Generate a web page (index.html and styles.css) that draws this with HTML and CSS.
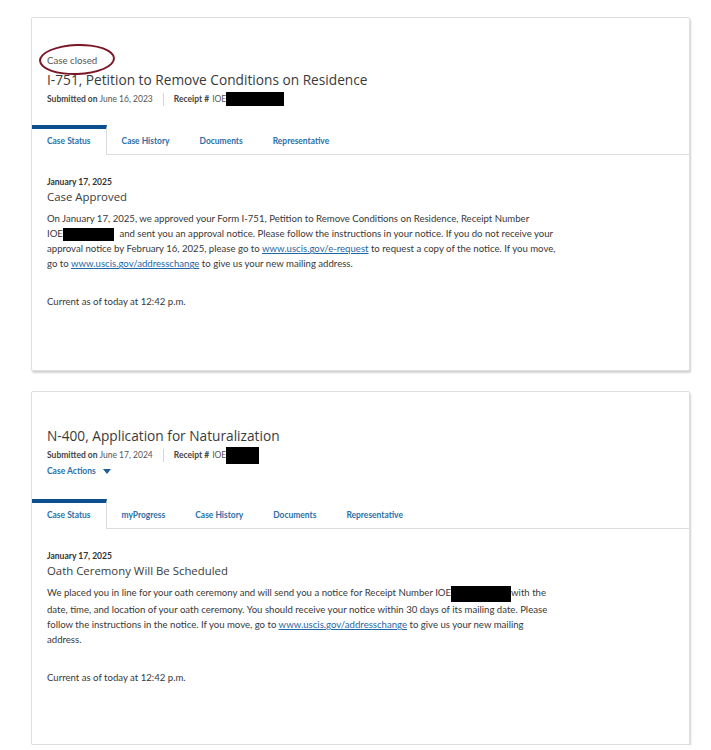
FILE: index.html
```html
<!DOCTYPE html>
<html lang="en">
<head>
<meta charset="utf-8">
<title>Case Status</title>
<link rel="stylesheet" href="styles.css">
</head>
<body>
<main class="page">
  <section class="card">
    <header class="card-head has-status">
      <div class="status-line"><span class="closed">Case closed</span></div>
      <h1 class="form-title">I-751, Petition to Remove Conditions on Residence</h1>
      <div class="meta">
        <span><b>Submitted on</b> June 16, 2023</span>
        <span class="sep"></span>
        <span class="receipt"><b>Receipt #</b>IOE<span class="redact r1"></span></span>
      </div>
    </header>
    <nav class="tabs">
      <a class="tab active">Case Status</a>
      <a class="tab">Case History</a>
      <a class="tab">Documents</a>
      <a class="tab">Representative</a>
    </nav>
    <div class="card-body">
      <div class="date">January 17, 2025</div>
      <h2 class="status">Case Approved</h2>
      <p class="msg">On January 17, 2025, we approved your Form I-751, Petition to Remove Conditions on Residence, Receipt Number<br>IOE<span class="redact r2"></span> and sent you an approval notice. Please follow the instructions in your notice. If you do not receive your<br>approval notice by February 16, 2025, please go to <a class="link">www.uscis.gov/e-request</a> to request a copy of the notice. If you move,<br>go to <a class="link">www.uscis.gov/addresschange</a> to give us your new mailing address.</p>
      <p class="current">Current as of today at 12:42 p.m.</p>
    </div>
  </section>

  <section class="card">
    <header class="card-head">
      <h1 class="form-title">N-400, Application for Naturalization</h1>
      <div class="meta">
        <span><b>Submitted on</b> June 17, 2024</span>
        <span class="sep"></span>
        <span class="receipt"><b>Receipt #</b>IOE<span class="redact r3"></span></span>
      </div>
      <div class="actions">Case Actions <span class="caret"></span></div>
    </header>
    <nav class="tabs">
      <a class="tab active">Case Status</a>
      <a class="tab">myProgress</a>
      <a class="tab">Case History</a>
      <a class="tab">Documents</a>
      <a class="tab">Representative</a>
    </nav>
    <div class="card-body">
      <div class="date">January 17, 2025</div>
      <h2 class="status">Oath Ceremony Will Be Scheduled</h2>
      <p class="msg">We placed you in line for your oath ceremony and will send you a notice for Receipt Number IOE<span class="redact r4"></span>with the<br>date, time, and location of your oath ceremony. You should receive your notice within 30 days of its mailing date. Please<br>follow the instructions in the notice. If you move, go to <a class="link">www.uscis.gov/addresschange</a> to give us your new mailing<br>address.</p>
      <p class="current">Current as of today at 12:42 p.m.</p>
    </div>
  </section>
</main>
</body>
</html>
```

FILE: styles.css
```css
* { box-sizing: border-box; }
html, body { margin: 0; padding: 0; background: #fff; }
body {
  font-family: "Lato", "Liberation Sans", sans-serif;
  color: #383838;
}
.page {
  padding: 17px 0 0 31px;
  display: flex;
  flex-direction: column;
  gap: 20px;
  width: 690px;
}
.card {
  width: 659px;
  height: 354px;
  border: 1px solid #dedede;
  border-radius: 2px;
  box-shadow: 1px 2px 2px rgba(0,0,0,0.18);
  background: #fff;
  display: flex;
  flex-direction: column;
}
.card-head {
  height: 107px;
  padding: 34px 15px 0;
}
.card-head.has-status {
  padding-top: 32px;
}
.status-line {
  height: 20px;
  display: flex;
  align-items: center;
}
.closed {
  position: relative;
  font-size: 9.7px;
  line-height: 12px;
  color: #555;
}
.closed::before {
  content: "";
  position: absolute;
  left: -8px;
  top: -10px;
  width: 72px;
  height: 27px;
  border: 2.5px solid #7b1626;
  border-radius: 50%;
  transform: rotate(-2deg);
}
.form-title {
  margin: 0;
  font-family: "Open Sans", sans-serif;
  font-weight: 400;
  font-size: 13.7px;
  line-height: 20px;
  color: #3a3a3a;
}
.meta {
  display: flex;
  align-items: center;
  font-size: 8.5px;
  color: #555;
  height: 18px;
}
.meta b { font-weight: 700; color: #444; }
.receipt { display: flex; align-items: center; }
.receipt b { margin-right: 3px; }
.sep {
  width: 1px;
  height: 13px;
  background: #d5d5d5;
  margin: 0 10px;
}
.redact {
  display: inline-block;
  background: #000;
  vertical-align: middle;
}
.r1 { width: 58px; height: 14px; }
.r2 { width: 51px; height: 13px; margin-right: 3px; }
.r3 { width: 33px; height: 17px; }
.r4 { width: 60px; height: 16px; }
.actions {
  font-size: 8.5px;
  font-weight: 700;
  color: #2a6fa8;
  height: 14px;
  display: flex;
  align-items: center;
  gap: 4px;
}
.caret {
  width: 0; height: 0;
  border-left: 4px solid transparent;
  border-right: 4px solid transparent;
  border-top: 5px solid #1f5f99;
  margin-left: 3px;
}
.tabs {
  display: flex;
  border-bottom: 1px solid #dcdcdc;
  height: 30px;
}
.tab {
  padding: 6px 15px 0;
  line-height: 13px;
  font-size: 8.45px;
  font-weight: 700;
  color: #2b70a9;
  border-top: 4px solid transparent;
  white-space: nowrap;
}
.tab.active {
  border-top-color: #0b4f8f;
  border-right: 1px solid #dcdcdc;
  background: #fff;
  margin-bottom: -1px;
}
.card-body {
  padding: 21px 15px 0;
}
.date {
  font-size: 8.5px;
  font-weight: 700;
  line-height: 12px;
  color: #333;
}
.status {
  margin: 0 0 5px;
  font-family: "Open Sans", sans-serif;
  font-weight: 400;
  font-size: 11.4px;
  line-height: 18px;
  color: #3a3a3a;
}
.msg {
  margin: 0;
  font-size: 9.6px;
  line-height: 15px;
  width: 540px;
  white-space: nowrap;
}
.link {
  color: #1f67a5;
  text-decoration: underline;
}
.current {
  margin: 25px 0 0;
  font-size: 9.6px;
}
```
